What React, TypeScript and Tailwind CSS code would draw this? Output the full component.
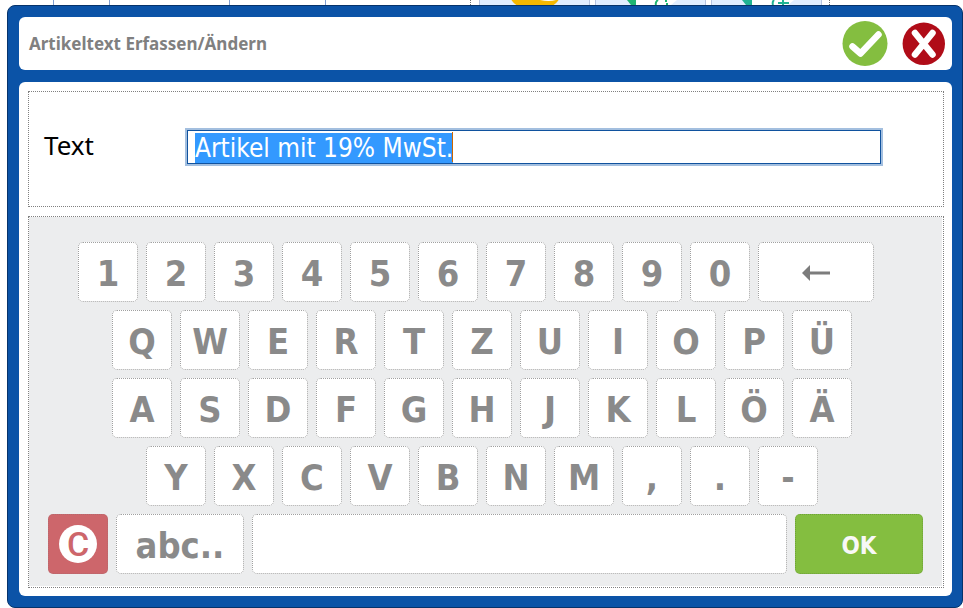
import React, { useEffect, useRef } from "react";

const keyRows = [
    { indent: "ml-[30px]", keys: ["1", "2", "3", "4", "5", "6", "7", "8", "9", "0"], backspace: true },
    { indent: "ml-16", keys: ["Q", "W", "E", "R", "T", "Z", "U", "I", "O", "P", "Ü"] },
    { indent: "ml-16", keys: ["A", "S", "D", "F", "G", "H", "J", "K", "L", "Ö", "Ä"] },
    { indent: "ml-[98px]", keys: ["Y", "X", "C", "V", "B", "N", "M", ",", ".", "-"] },
];

const keyBase =
    "h-[60px] shrink-0 flex items-center justify-center rounded-[5px] border border-dotted border-[#a0a0a0] bg-white text-[36px] leading-none font-bold text-[#8a8a8a]";

// Sliver of the article screen that stays visible above the dialog
function Backdrop() {
    return (
        <div className="flex h-[5px] overflow-hidden" aria-hidden="true">
            <div className="w-[54px] shrink-0 border-r border-[#7f9fd3]" />
            <div className="w-14 shrink-0 border-r border-[#7f9fd3]" />
            <div className="w-[120px] shrink-0 border-r border-[#7f9fd3]" />
            <div className="w-24 shrink-0 border-r border-[#7f9fd3]" />
            <div className="w-[145px] shrink-0 border-r border-dotted border-[#707070]" />
            <div className="ml-2 flex shrink-0 gap-[5px]">
                <svg width="111" height="5" className="border-x border-dashed border-[#b4c3e0] bg-[#e1eeff]">
                    <ellipse cx="55" cy="-5" rx="25" ry="15" fill="#f5b800" />
                    <path d="M60 0 h16 q-7 2 -16 0z" fill="#fff" />
                </svg>
                <svg width="111" height="5" className="border-x border-dashed border-[#b4c3e0] bg-[#e1eeff]">
                    <path d="M39 0 H81 L75 5 H39z" fill="#fff" />
                    <path d="M31 0 h9 v5 h-5z" fill="#1fb573" />
                    <path d="M62 0 q-3 2 -2 5 M70 0 v2 M71 3 v2" stroke="#1fb573" strokeWidth="2" fill="none" />
                </svg>
                <svg width="111" height="5" className="border-x border-dashed border-[#b4c3e0] bg-[#e1eeff]">
                    <path d="M39 0 H82 L76 5 H39z" fill="#fff" />
                    <path d="M30 0 h10 v5 h-6z" fill="#20b394" />
                    <path d="M62 0 q-2 2 -1 5 M66 3 h11 M71 0 v5" stroke="#20b394" strokeWidth="2" fill="none" />
                </svg>
            </div>
            <div className="w-2 shrink-0 border-r border-dotted border-[#707070]" />
        </div>
    );
}

function DialogHeader() {
    return (
        <header className="flex h-[53px] items-center rounded-md bg-white pl-[10px] pr-[7px]">
            <h1 className="flex-1 font-['Noto_Sans',sans-serif] text-[17px] font-bold text-[#808080]">
                Artikeltext Erfassen/Ändern
            </h1>
            <div className="flex items-center gap-[14px]">
                <button type="button" aria-label="Übernehmen">
                    <svg width="46" height="46" viewBox="0 0 46 46" className="block">
                        <circle cx="23" cy="22.5" r="22.5" fill="#84be40" />
                        <path d="M10.5 25.5 L18.5 32.5 L36.5 13.5" fill="none" stroke="#fff" strokeWidth="6.5" strokeLinecap="round" strokeLinejoin="round" />
                    </svg>
                </button>
                <button type="button" aria-label="Abbrechen">
                    <svg width="43" height="44" viewBox="0 0 43 44" className="block">
                        <circle cx="21.8" cy="21.8" r="21.2" fill="#b00c18" />
                        <path d="M13 11 L30.5 32.5 M30.5 11 L13 32.5" fill="none" stroke="#fff" strokeWidth="6.5" strokeLinecap="round" />
                    </svg>
                </button>
            </div>
        </header>
    );
}

function TextField() {
    const inputRef = useRef<HTMLInputElement>(null);

    useEffect(() => {
        inputRef.current?.focus();
        inputRef.current?.select();
    }, []);

    return (
        <div className="flex h-[116px] items-center border border-dotted border-[#808080] pl-[15px] pr-[62px] pb-1 text-[26px] leading-[30px] text-black">
            <label htmlFor="artikeltext" className="w-[143px] shrink-0 pb-1 font-['Noto_Sans',sans-serif]">
                Text
            </label>
            <div className="relative flex-1">
                <input
                    ref={inputRef}
                    id="artikeltext"
                    type="text"
                    defaultValue="Artikel mit 19% MwSt."
                    className="block h-[34px] w-full border border-[#10529e] bg-white px-[7px] pt-px outline-2 outline-[#a3bfdf] selection:bg-[#3399ff] selection:text-white"
                />
                <span className="absolute left-[265px] top-[2px] h-[30px] w-px bg-[#cc6600]" />
            </div>
        </div>
    );
}

function Keyboard() {
    return (
        <div className="mt-[9px] border border-dotted border-[#808080] pb-px pr-px">
            <div className="flex flex-col gap-2 bg-[#ecedee] pb-3 pl-[19px] pr-[19px] pt-[25px]">
                {keyRows.map((row) => (
                    <div key={row.keys[0]} className={`flex gap-2 ${row.indent}`}>
                        {row.keys.map((k) => (
                            <button key={k} type="button" className={`${keyBase} w-[60px] pt-1`}>
                                {k}
                            </button>
                        ))}
                        {row.backspace && (
                            <button type="button" aria-label="Rücktaste" className={`${keyBase} w-[116px]`}>
                                <svg width="30" height="16" viewBox="0 0 30 16" className="mt-px">
                                    <path d="M1 8 L9 0 V6.5 H29 V9.5 H9 V16z" fill="#7c7c7c" />
                                </svg>
                            </button>
                        )}
                    </div>
                ))}
                <div className="flex gap-2">
                    <button
                        type="button"
                        aria-label="Text löschen"
                        className="flex h-[60px] w-[60px] shrink-0 items-center justify-center rounded-[5px] border border-dotted border-[#b5696d] bg-[#cd666b]"
                    >
                        <span className="flex h-[38px] w-[38px] items-center justify-center rounded-full bg-white font-[Roboto] text-[34px] leading-none font-medium text-[#cd666b]">
                            C
                        </span>
                    </button>
                    <button type="button" className={`${keyBase} w-32 pt-1`}>
                        abc..
                    </button>
                    <button type="button" aria-label="Leerzeichen" className={`${keyBase} min-w-0 flex-1`} />
                    <button
                        type="button"
                        className="h-[60px] w-32 shrink-0 rounded-[5px] border border-dotted border-[#6fa03a] bg-[#84be40] pt-1 text-[24px] leading-none font-bold text-[#f8f8f8]"
                    >
                        OK
                    </button>
                </div>
            </div>
        </div>
    );
}

export default function App() {
    return (
        <div className="bg-white font-['DejaVu_Sans_Condensed','DejaVu_Sans',sans-serif]">
            <Backdrop />
            <div
                role="dialog"
                aria-label="Artikeltext Erfassen/Ändern"
                className="ml-[7px] rounded-lg border border-[#06336b] bg-[#0b53a7] pb-[11px] pl-[11px] pr-[10px] pt-[11px]"
            >
                <DialogHeader />
                <main className="mt-3 rounded-md bg-white pb-2 pl-[9px] pr-2 pt-[9px]">
                    <TextField />
                    <Keyboard />
                </main>
            </div>
        </div>
    );
}
